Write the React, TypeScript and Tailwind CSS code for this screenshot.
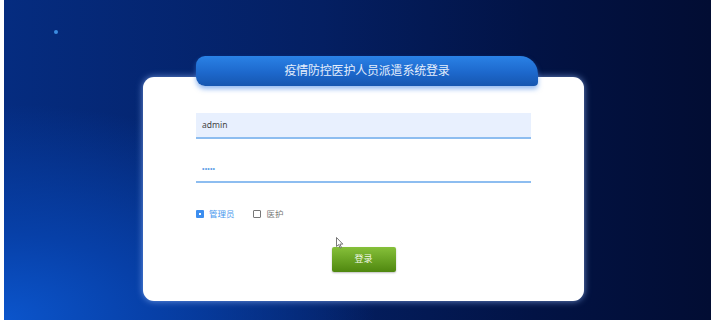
import React, { useState } from 'react';

/**
 * 疫情防控医护人员派遣系统 - 登录页
 */
export default function App() {
  const [role, setRole] = useState<'admin' | 'nurse'>('admin');

  return (
    <div className="flex w-[711px] h-[320px] overflow-hidden font-['Liberation_Sans','Noto_Sans_CJK_SC',sans-serif]">
      {/* 左侧白边 */}
      <div className="w-[4px] bg-white" />

      {/* 背景 */}
      <div className="relative flex-1 bg-[radial-gradient(ellipse_70%_90%_at_0%_100%,#0b55cc_0%,#0740a8_30%,rgba(5,40,120,0)_75%),linear-gradient(90deg,#052c80_0%,#041f62_45%,#021345_75%,#020d33_100%)] pl-[139px] pt-[56px]">
        <span className="absolute left-[50px] top-[30px] w-[4px] h-[4px] rounded-full bg-[#3c8ce0]" />

        <div className="flex flex-col w-[441px]">
          {/* 标题 */}
          <div className="relative z-10 ml-[53px] -mb-[9px] w-[342px] h-[30px] flex items-center justify-center rounded-tl-[9px] rounded-bl-[9px] rounded-tr-[18px] rounded-br-[4px] bg-[linear-gradient(180deg,#2a82e6_0%,#1d68cc_55%,#1656b0_100%)] shadow-[0_3px_5px_rgba(60,130,230,0.55)]">
            <span className="text-[12px] text-[#e4eefc] tracking-[-0.2px]">疫情防控医护人员派遣系统登录</span>
          </div>

          {/* 表单 */}
          <div className="relative h-[224px] rounded-[11px] bg-white shadow-[0_0_7px_rgba(150,190,255,0.7)] pl-[53px] pr-[53px] pt-[36px]">
            <div className="h-[26px] flex items-center px-[6px] bg-[#e8f0fe] border-b-2 border-[#8dbdf0]">
              <span className="text-[8.5px] text-[#444] font-['Noto_Sans',sans-serif]">admin</span>
            </div>

            <div className="mt-[18px] h-[26px] flex items-center px-[6px] border-b-2 border-[#8dbdf0]">
              <span className="text-[7px] text-[#5d9ee6] tracking-[0.2px]">•••••</span>
            </div>

            <div className="mt-[26px] flex items-center h-[10px]">
              <button
                className="flex items-center gap-[5px] mr-[18px]"
                onClick={() => setRole('admin')}
              >
                <span
                  className={
                    role === 'admin'
                      ? 'w-[8px] h-[8px] rounded-[1px] bg-[#3d8eef] flex items-center justify-center'
                      : 'w-[8px] h-[8px] rounded-[1px] border border-[#777] bg-white'
                  }
                >
                  {role === 'admin' && <span className="w-[2px] h-[2px] bg-white" />}
                </span>
                <span className={role === 'admin' ? 'text-[8.5px] text-[#4a98ee]' : 'text-[8.5px] text-[#777]'}>管理员</span>
              </button>
              <button className="flex items-center gap-[6px]" onClick={() => setRole('nurse')}>
                <span
                  className={
                    role === 'nurse'
                      ? 'w-[8px] h-[8px] rounded-[1px] bg-[#3d8eef] flex items-center justify-center'
                      : 'w-[8px] h-[8px] rounded-[1px] border border-[#777] bg-white'
                  }
                >
                  {role === 'nurse' && <span className="w-[2px] h-[2px] bg-white" />}
                </span>
                <span className={role === 'nurse' ? 'text-[8.5px] text-[#4a98ee]' : 'text-[8.5px] text-[#777]'}>医护</span>
              </button>
            </div>

            <div className="mt-[28px] flex justify-center">
              <button className="w-[64px] h-[25px] rounded-[2px] bg-[linear-gradient(180deg,#86c03a_0%,#6aa424_50%,#4f870f_100%)] shadow-[0_1px_2px_rgba(0,0,0,0.25)] text-[9px] text-[#f2f8e8]">
                登录
              </button>
            </div>

            {/* 鼠标指针 */}
            <svg className="absolute left-[193px] top-[160px]" width="8" height="12" viewBox="0 0 8 12">
              <path d="M0.5 0.5 L0.5 9.5 L2.6 7.6 L4.1 11 L5.4 10.4 L3.9 7.1 L6.8 7.1 Z" fill="#fff" stroke="#555" strokeWidth="0.8" />
            </svg>
          </div>
        </div>
      </div>
    </div>
  );
}
